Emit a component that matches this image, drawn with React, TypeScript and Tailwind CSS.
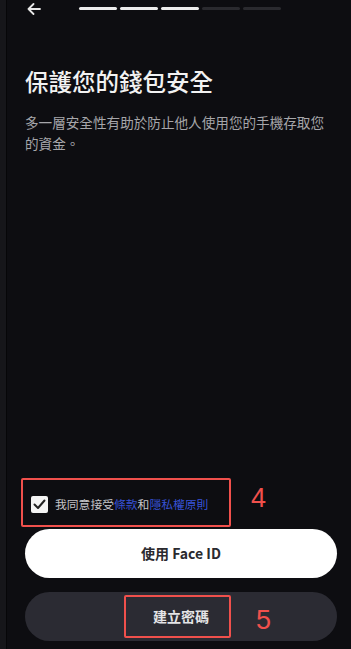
import React from "react";

const font = { fontFamily: '"Noto Sans CJK TC", "Noto Sans", sans-serif' };

const steps = [true, true, true, false, false];

const App: React.FC = () => {
  return (
    <div
      className="relative w-[351px] h-[649px] bg-[#0d0d11] flex overflow-hidden"
      style={font}
    >
      {/* left edge of the phone frame */}
      <div className="w-[7px] h-full bg-[#16161a] border-r border-[#060608]" />

      <div className="flex-1 flex flex-col pr-[14px]">
        {/* header */}
        <div className="h-[17px] flex items-center">
          <svg
            width="14"
            height="12"
            viewBox="0 0 14 12"
            className="ml-[20px]"
            fill="none"
            stroke="#e8e8e8"
            strokeWidth="1.8"
            strokeLinecap="round"
            strokeLinejoin="round"
          >
            <path d="M13 6H1.5M6.5 1L1.5 6l5 5" />
          </svg>
          <div className="ml-[38px] flex gap-[3px]">
            {steps.map((on, i) => (
              <div
                key={i}
                className={
                  on
                    ? "w-[38px] h-[3px] rounded-full bg-[#ececec]"
                    : "w-[38px] h-[3px] rounded-full bg-[#2a2a2f]"
                }
              />
            ))}
          </div>
        </div>

        {/* title */}
        <h1 className="mt-[48px] ml-[18px] text-[23.5px] leading-[32px] font-medium text-[#f2f2f2]">
          保護您的錢包安全
        </h1>
        <p className="mt-[15px] ml-[18px] text-[13.6px] leading-[21px] text-[#a6a6aa]">
          多一層安全性有助於防止他人使用您的手機存取您的資金。
        </p>

        <div className="flex-1" />

        {/* terms */}
        <div className="flex items-center ml-[24px] h-[18px]">
          <div className="w-[17px] h-[17px] rounded-[2px] bg-[#f4f4f4] flex items-center justify-center">
            <svg
              width="13"
              height="11"
              viewBox="0 0 13 11"
              fill="none"
              stroke="#222"
              strokeWidth="2"
              strokeLinecap="round"
              strokeLinejoin="round"
            >
              <path d="M1.5 5.5l3.5 3.5L11.5 1.5" />
            </svg>
          </div>
          <span className="ml-[7px] text-[11.8px] text-[#c4c4c8]">
            我同意接受<span className="text-[#3752d6]">條款</span>和
            <span className="text-[#3752d6]">隱私權原則</span>
          </span>
        </div>

        {/* buttons */}
        <button className="mt-[16px] ml-[18px] h-[49px] rounded-full bg-white text-[14px] font-bold text-[#2a2a2e]">
          使用 Face ID
        </button>
        <button className="mt-[14px] ml-[18px] mb-[8px] h-[49px] rounded-full bg-[#2b2b33] text-[14px] font-bold text-[#e4e4e6]">
          建立密碼
        </button>
      </div>

      {/* annotations */}
      <div className="absolute left-[21px] top-[478px] w-[210px] h-[49px] border-2 border-[#f0504c] rounded-[2px]" />
      <div
        className="absolute left-[251px] top-[481px] text-[27px] leading-[34px] text-[#f0504c]"
        style={{ fontFamily: '"Liberation Sans", sans-serif' }}
      >
        4
      </div>
      <div className="absolute left-[124px] top-[595px] w-[107px] h-[43px] border-2 border-[#f0504c] rounded-[2px]" />
      <div
        className="absolute left-[256px] top-[603px] text-[27px] leading-[34px] text-[#f0504c]"
        style={{ fontFamily: '"Liberation Sans", sans-serif' }}
      >
        5
      </div>
    </div>
  );
};

export default App;
